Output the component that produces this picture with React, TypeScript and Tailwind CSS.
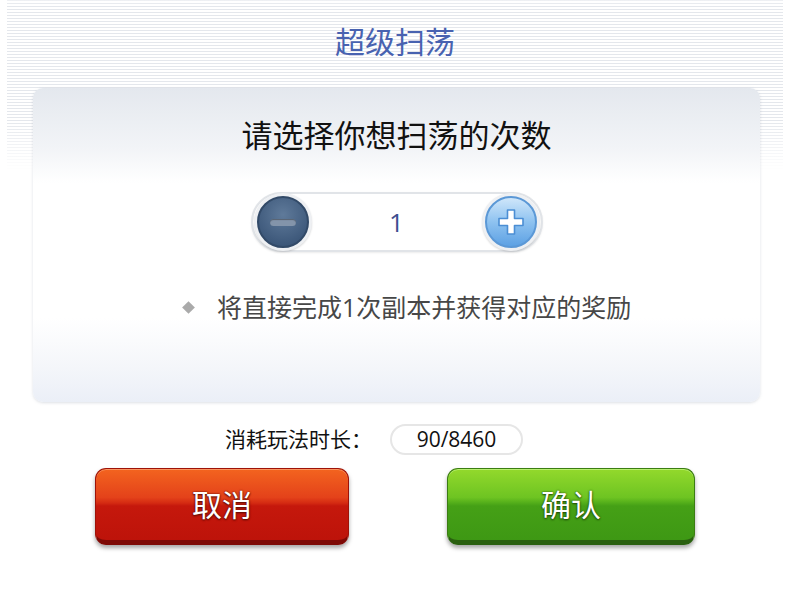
import { useState } from 'react';

const font = "font-['Open_Sans','Noto_Sans_CJK_SC',sans-serif]";

function MinusButton({ onClick }: { onClick: () => void }) {
  return (
    <button
      onClick={onClick}
      className="flex h-[58px] w-[58px] items-center justify-center rounded-full bg-[#eef0f3] shadow-[0_1px_2px_rgba(0,0,0,0.15)]">
      <span className="flex h-[52px] w-[52px] items-center justify-center rounded-full border-2 border-[#324a68] bg-[radial-gradient(circle_at_50%_35%,#5f7a9a,#3f5a7c_70%,#344e70)]">
        <span className="h-[7px] w-[26px] rounded-full bg-[#8394aa] shadow-[inset_0_1px_1px_rgba(0,0,0,0.35)]" />
      </span>
    </button>
  );
}

function PlusButton({ onClick }: { onClick: () => void }) {
  return (
    <button
      onClick={onClick}
      className="flex h-[58px] w-[58px] items-center justify-center rounded-full bg-[#eef0f3] shadow-[0_1px_2px_rgba(0,0,0,0.15)]">
      <span className="flex h-[52px] w-[52px] items-center justify-center rounded-full border-2 border-[#5b98d6] bg-[linear-gradient(to_bottom,#cfe6fa,#8ec2f0_50%,#5da1e4)]">
        <svg width="30" height="30" viewBox="0 0 30 30">
          <path
            d="M11.5 3h7v8.5H27v7h-8.5V27h-7v-8.5H3v-7h8.5z"
            fill="#ffffff"
            stroke="#4b8ed4"
            strokeWidth="1.6"
            strokeLinejoin="round"
          />
        </svg>
      </span>
    </button>
  );
}

export default function App() {
  const [count, setCount] = useState(1);

  return (
    <div className={`${font} min-h-[592px] w-[790px] bg-white`}>
      <div className="mx-[7px] bg-[linear-gradient(to_bottom,rgba(255,255,255,0.4)_0px,rgba(255,255,255,0)_6px,rgba(255,255,255,0)_120px,#fff_170px),repeating-linear-gradient(to_bottom,#e4e7ec_0px,#e4e7ec_1.5px,#fff_1.5px,#fff_3px)] bg-no-repeat pb-px pt-[22px]">
        <h1 className="flex h-[40px] items-center justify-center text-[30px] leading-[40px] text-[#4862b0]">
          超级扫荡
        </h1>

        <div className="ml-[26px] mr-[23px] mt-[26px] rounded-[10px] bg-[linear-gradient(to_bottom,#e4e8ee_0px,#f2f4f7_60px,#ffffff_95px,#ffffff_230px,#f4f6fa_280px,#ebeff7_314px)] pb-[79px] pt-[27px] shadow-[0_1px_3px_rgba(120,130,150,0.25)]">
          <h2 className="text-center text-[31px] leading-[40px] text-[#111]">
            请选择你想扫荡的次数
          </h2>

          <div className="mt-[37px] flex justify-center">
            <div className="flex h-[60px] w-[292px] items-center justify-between rounded-full border-2 border-[#e1e4e8] bg-white px-[1px] shadow-[0_1px_2px_rgba(0,0,0,0.08)]">
              <MinusButton onClick={() => setCount(Math.max(1, count - 1))} />
              <span className="text-[26px] leading-none text-[#3d4f8f]">{count}</span>
              <PlusButton onClick={() => setCount(count + 1)} />
            </div>
          </div>

          <div className="mt-[39px] flex h-[32px] items-center pl-[151px]">
            <span className="h-[9px] w-[9px] rotate-45 bg-[#aaaaaa]" />
            <span className="ml-[24px] text-[25px] leading-[32px] text-[#474747]">
              将直接完成1次副本并获得对应的奖励
            </span>
          </div>
        </div>
      </div>

      <div className="mt-[21px] flex h-[31px] items-center pl-[225px]">
        <span className="text-[21px] leading-none text-[#111]">消耗玩法时长：</span>
        <span className="ml-[18px] flex h-[31px] w-[133px] items-center justify-center rounded-full border-2 border-[#e6e6e6] bg-white text-[21px] leading-none text-[#111]">
          90/8460
        </span>
      </div>

      <div className="mt-[13px] flex gap-[98px] pl-[95px]">
        <button className="flex h-[77px] w-[254px] items-center justify-center rounded-[11px] border border-[#9e1208] border-b-[5px] border-b-[#7e0a06] bg-[linear-gradient(to_bottom,#f3641f_0%,#e4421a_40%,#d42a12_48%,#c5180c_52%,#bd130a_100%)] text-[30px] text-white shadow-[0_3px_4px_rgba(0,0,0,0.35),inset_0_1px_0_rgba(255,180,140,0.6)] [text-shadow:0_0_2px_#5a0a04,0_1px_2px_#5a0a04]">
          取消
        </button>
        <button className="flex h-[77px] w-[248px] items-center justify-center rounded-[11px] border border-[#3b7d12] border-b-[5px] border-b-[#2a6010] bg-[linear-gradient(to_bottom,#93d92c_0%,#6ec422_40%,#52ad1a_48%,#45a016_52%,#3e9814_100%)] text-[30px] text-white shadow-[0_3px_4px_rgba(0,0,0,0.35),inset_0_1px_0_rgba(210,255,160,0.6)] [text-shadow:0_0_2px_#1f4a08,0_1px_2px_#1f4a08]">
          确认
        </button>
      </div>
    </div>
  );
}
